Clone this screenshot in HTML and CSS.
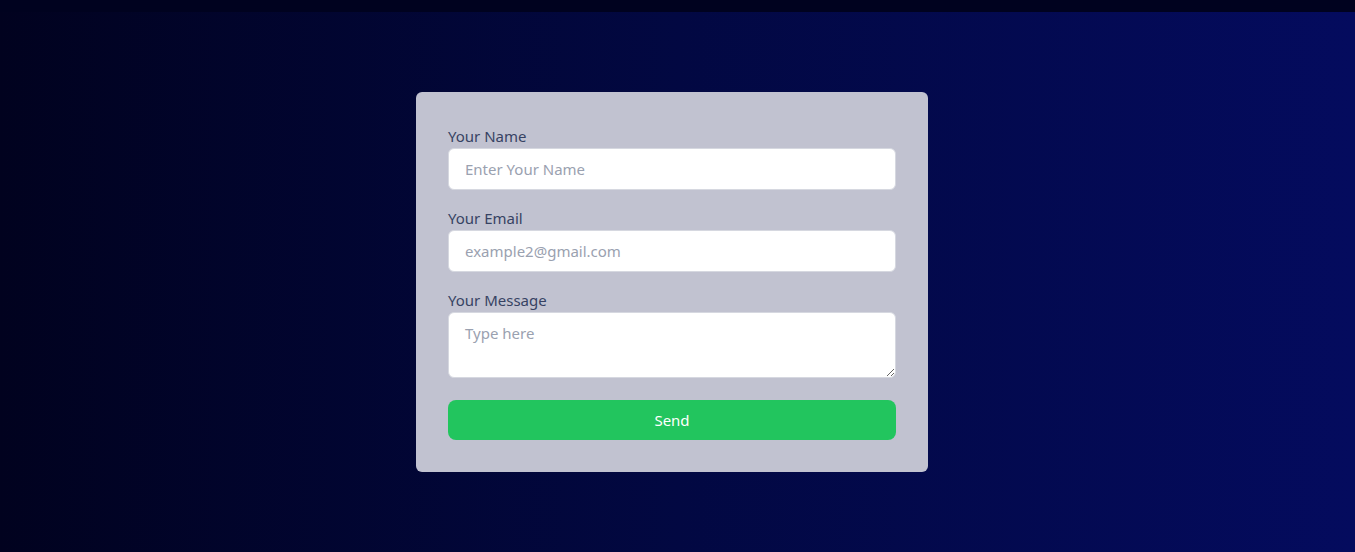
FILE: index.html
```html
<!DOCTYPE html>
<html lang="en">
<head>
<meta charset="utf-8">
<title>Contact</title>
<link rel="stylesheet" href="styles.css">
</head>
<body>
<div class="topbar"></div>
<main class="page">
  <form class="card">
    <label class="label" for="name">Your Name</label>
    <input class="field" id="name" type="text" placeholder="Enter Your Name">
    <label class="label" for="email">Your Email</label>
    <input class="field" id="email" type="email" placeholder="example2@gmail.com">
    <label class="label" for="msg">Your Message</label>
    <textarea class="field area" id="msg" placeholder="Type here"></textarea>
    <button class="send" type="button">Send</button>
  </form>
</main>
</body>
</html>
```
FILE: styles.css
```css
* { box-sizing: border-box; }
html, body { margin: 0; height: 100%; }
body {
  font-family: "Noto Sans", "Open Sans", sans-serif;
  background: #000321;
  display: flex;
  flex-direction: column;
}
.topbar { height: 12px; background: #00021f; flex: none; }
.page {
  flex: 1;
  background: linear-gradient(to right, #01021f 0%, #020842 50%, #040b5e 100%);
  display: flex;
  justify-content: center;
  align-items: flex-start;
  padding: 80px 11px 0 0;
}
.card {
  width: 512px;
  background: #c1c2d0;
  border-radius: 6px;
  padding: 32px;
  display: flex;
  flex-direction: column;
}
.label {
  font-size: 15px;
  line-height: 24px;
  color: #374263;
}
.field {
  height: 42px;
  border: 1px solid #d6d8e0;
  border-radius: 6px;
  background: #fff;
  padding: 0 16px;
  font-family: inherit;
  font-size: 15px;
  color: #111;
  margin-bottom: 16px;
  outline: none;
}
.field::placeholder { color: #9aa1b0; }
.area {
  height: 66px;
  padding-top: 10px;
  margin-bottom: 22px;
  resize: vertical;
}
.send {
  height: 40px;
  border: none;
  border-radius: 8px;
  background: #22c55e;
  color: #fff;
  font-family: inherit;
  font-size: 15px;
}
```
